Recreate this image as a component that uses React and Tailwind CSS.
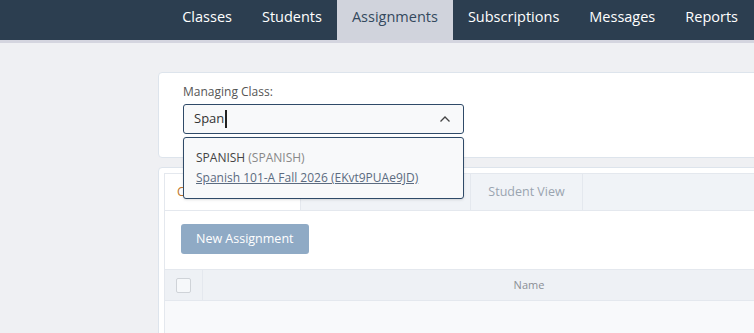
import React from "react";

const navItems = ["Classes", "Students", "Assignments", "Subscriptions", "Messages", "Reports"];

const NavBar = () => {
  return (
    <div className="border-b-[3px] border-[#d4d5df]">
      <nav className="flex h-10 justify-end bg-[#2c3e50] pr-[1px]">
        {navItems.map((item) => (
          <a
            key={item}
            className={
              item === "Assignments"
                ? "flex items-start bg-[#d0d3dc] px-[15px] pt-[6px] text-[14.5px] text-[#34495e]"
                : "flex items-start px-[15px] pt-[6px] text-[14.5px] text-white"
            }
          >
            {item}
          </a>
        ))}
      </nav>
    </div>
  );
};

const ChevronUp = () => (
  <svg width="12" height="8" viewBox="0 0 12 8" fill="none">
    <path d="M1.5 6.5 L6 2 L10.5 6.5" stroke="#444" strokeWidth="1.3" />
  </svg>
);

const ClassPicker = () => {
  return (
    <div className="relative w-[700px] rounded-[4px] border border-[#dde4ec] bg-white px-6 pt-[10px] pb-[23px]">
      <label className="block text-[12px] leading-[18px] text-[#555]">Managing Class:</label>
      <div className="relative mt-[3px] w-[281px]">
        <div className="flex h-[30px] items-center justify-between rounded-[3px] border border-[#2f4a68] bg-[#f8f9fa] pl-[10px] pr-[12px]">
          <span className="flex items-center text-[13px] text-[#333]">
            Span
            <span className="ml-[1px] inline-block h-[18px] w-[2px] bg-[#222]" />
          </span>
          <ChevronUp />
        </div>
        <div className="absolute top-[33px] left-0 z-10 w-[281px] rounded-[3px] border border-[#2f4a68] bg-[#f8f9fa] px-3 pt-[10px] pb-[10px] shadow-sm">
          <div className="text-[12px] leading-[20px] text-[#444]">
            SPANISH <span className="text-[#888]">(SPANISH)</span>
          </div>
          <div className="text-[12px] leading-[20px] text-[#5b6b80] underline">
            Spanish 101-A Fall 2026 (EKvt9PUAe9JD)
          </div>
        </div>
      </div>
    </div>
  );
};

const AssignmentsPanel = () => {
  return (
    <div className="mt-[9px] w-[800px] rounded-[4px] border border-[#dde4ec] bg-white pt-[5px] pl-[5px]">
      <div className="border-t border-l border-[#e4e8ee]">
        <div className="flex h-[37px] border-b border-[#e4e8ee] bg-[#f0f3f7] text-[12.5px]">
          <div className="flex w-[136px] items-center border-r border-[#e4e8ee] bg-white px-3 text-[#c0762c]">
            Current
          </div>
          <div className="flex w-[170px] items-center justify-center border-r border-[#e4e8ee] text-[#9aa4b0]">
            Archived
          </div>
          <div className="flex w-[112px] items-center justify-center border-r border-[#e4e8ee] text-[#9aa4b0]">
            Student View
          </div>
        </div>
        <div className="px-4 pt-[13px] pb-[15px]">
          <button className="h-[30px] rounded-[3px] bg-[#8faac5] px-[15px] text-[12.5px] text-white">
            New Assignment
          </button>
        </div>
        <div className="flex h-[32px] border-y border-[#e4e8ee] bg-[#eef1f5]">
          <div className="flex w-[38px] items-center justify-center border-r border-[#e4e8ee]">
            <span className="h-[15px] w-[15px] rounded-[2px] border border-[#cfd3d8] bg-[#f6f8fa]" />
          </div>
          <div className="flex w-[652px] items-center justify-center text-[11px] text-[#8a8f96]">
            Name
          </div>
        </div>
        <div className="h-[40px] bg-[#f8f9fb]" />
      </div>
    </div>
  );
};

export default function App() {
  return (
    <div
      className="h-[333px] w-[754px] overflow-hidden bg-[#eff0f3]"
      style={{ fontFamily: '"Open Sans", "Noto Sans", sans-serif' }}
    >
      <NavBar />
      <main className="pt-[29px] pl-[158px]">
        <ClassPicker />
        <AssignmentsPanel />
      </main>
    </div>
  );
}
